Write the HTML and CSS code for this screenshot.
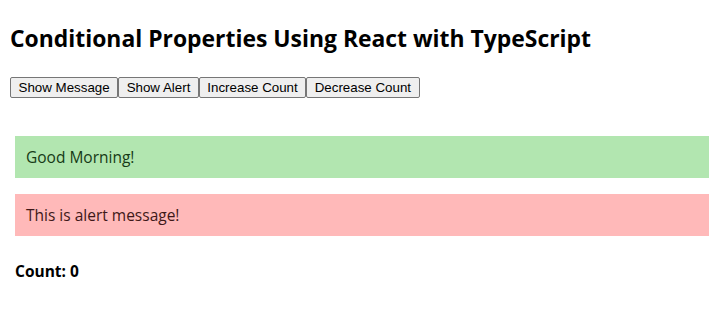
FILE: index.html
```html
<!DOCTYPE html>
<html>
<head>
<meta charset="utf-8">
<link rel="stylesheet" href="styles.css">
</head>
<body>
<div class="app">
  <h1 class="title">Conditional Properties Using React with TypeScript</h1>
  <div class="toolbar"><button class="btn">Show Message</button><button class="btn">Show Alert</button><button class="btn">Increase Count</button><button class="btn">Decrease Count</button></div>
  <div class="panel">
    <div class="msg msg-success">Good Morning!</div>
    <div class="msg msg-alert">This is alert message!</div>
    <div class="count">Count: 0</div>
  </div>
</div>
</body>
</html>
```
FILE: styles.css
```css
html, body {
  margin: 0;
  padding: 0;
  background: #ffffff;
}
.app {
  padding: 24px 10px 0 10px;
  font-family: "Open Sans", "Noto Sans", sans-serif;
  color: #000;
}
.title {
  margin: 0;
  font-size: 22.9px;
  font-weight: 700;
  line-height: 30px;
  letter-spacing: 0;
}
.toolbar {
  display: flex;
  margin-top: 23px;
}
.btn {
  font-family: "Liberation Sans", Arial, sans-serif;
  font-size: 13.33px;
  height: 21px;
  padding: 1px 7.5px;
  border: 1px solid #767676;
  border-radius: 2px;
  background: #efefef;
  color: #000;
  margin: 0;
}
.panel {
  padding: 38px 1px 0 5px;
  display: flex;
  flex-direction: column;
  gap: 16px;
}
.msg {
  height: 42px;
  box-sizing: border-box;
  padding: 0 11px;
  display: flex;
  align-items: center;
  font-size: 15.5px;
}
.msg-success {
  background: #b2e6b0;
  color: #163a16;
}
.msg-alert {
  background: #ffb9b9;
  color: #3e1818;
}
.count {
  margin-top: 8px;
  font-weight: 700;
  font-size: 15.5px;
}
```
